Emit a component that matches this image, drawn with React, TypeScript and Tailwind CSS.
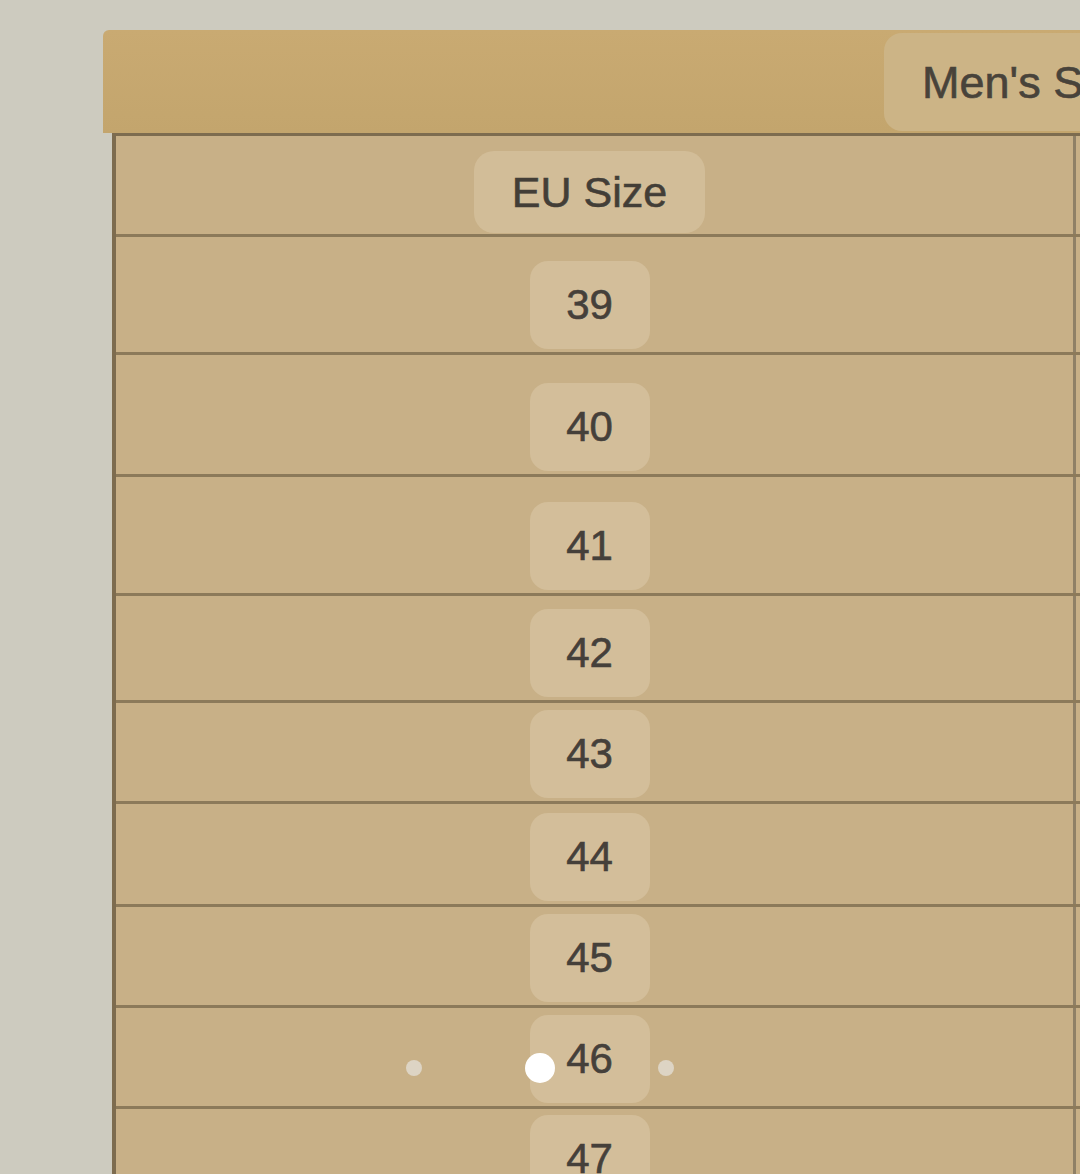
import React from 'react';

const rows: { label: string; h: number }[] = [
  { label: '39', h: 118 },
  { label: '40', h: 122 },
  { label: '41', h: 119 },
  { label: '42', h: 107 },
  { label: '43', h: 101 },
  { label: '44', h: 103 },
  { label: '45', h: 101 },
  { label: '46', h: 101 },
  { label: '47', h: 100 },
];

const font = { fontFamily: '"Liberation Sans", Arial, sans-serif' };

export default function App() {
  return (
    <div
      className="relative w-[1080px] h-[1174px] overflow-hidden bg-[#cdcbbf] pt-[30px] pl-[103px]"
      style={font}
    >
      {/* header band */}
      <div className="flex h-[103px] w-[1000px] rounded-tl-[6px] bg-gradient-to-b from-[#c9aa72] to-[#c3a56d] pl-[781px] pt-[3px] pb-[2px]">
        <div className="flex h-full w-[400px] items-center rounded-[18px] bg-[#ccb486] pl-[38px]">
          <span className="text-[45px] leading-none text-[#48433a] whitespace-nowrap [-webkit-text-stroke:0.6px_#48433a]">
            Men's Size
          </span>
        </div>
      </div>

      {/* table */}
      <div className="ml-[9px] w-[1000px] border-l-[4px] border-t-[3px] border-[#7d6c4f] bg-[#c8b087]">
        <div className="grid h-[101px] grid-cols-[957px_1fr] border-b-[3px] border-[#8c7a5a]">
          <div className="flex items-end justify-center pr-[10px] pb-[1px]">
            <div className="flex h-[82px] w-[231px] items-center justify-center rounded-[20px] bg-[#d2bd98]">
              <span className="text-[43px] leading-none text-[#433e37] [-webkit-text-stroke:0.6px_#433e37]">EU Size</span>
            </div>
          </div>
          <div className="border-l-[3px] border-[#8f8066]" />
        </div>
        {rows.map((r) => (
          <div
            key={r.label}
            className="grid grid-cols-[957px_1fr] border-b-[3px] border-[#8c7a5a]"
            style={{ height: r.h }}
          >
            <div className="flex items-end justify-center pr-[10px] pb-[3px]">
              <div className="flex h-[88px] w-[120px] items-center justify-center rounded-[18px] bg-[#d3be9a]">
                <span className="text-[42px] leading-none text-[#45403a] [-webkit-text-stroke:0.6px_#45403a]">
                  {r.label}
                </span>
              </div>
            </div>
            <div className="border-l-[3px] border-[#8f8066]" />
          </div>
        ))}
      </div>

      {/* carousel dots */}
      <div className="absolute left-[406px] top-[1053px] flex items-center">
        <div className="h-[16px] w-[16px] rounded-full bg-[#ddd4c4]" />
        <div className="ml-[103px] h-[30px] w-[30px] rounded-full bg-white" />
        <div className="ml-[103px] h-[16px] w-[16px] rounded-full bg-[#ddd4c4]" />
      </div>
    </div>
  );
}
